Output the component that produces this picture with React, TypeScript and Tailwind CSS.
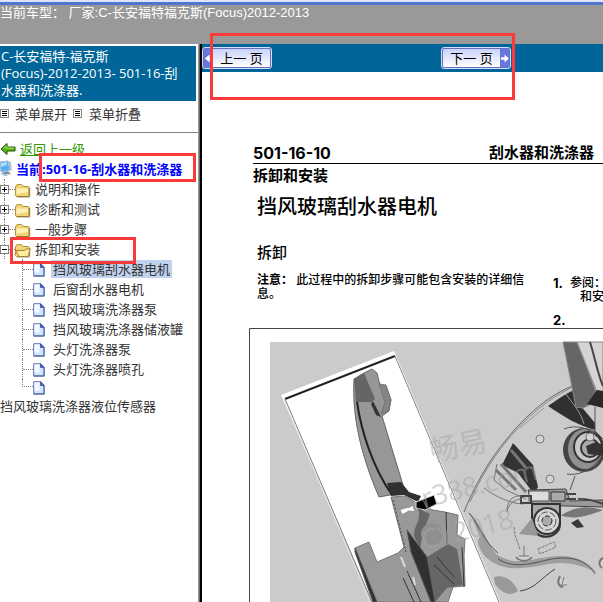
import React from "react";

const sections = ["说明和操作", "诊断和测试", "一般步骤"];

const pages = [
  "挡风玻璃刮水器电机",
  "后窗刮水器电机",
  "挡风玻璃洗涤器泵",
  "挡风玻璃洗涤器储液罐",
  "头灯洗涤器泵",
  "头灯洗涤器喷孔",
];

function MenuIcon() {
  return (
    <svg width="9" height="9" viewBox="0 0 9 9" aria-hidden="true" shapeRendering="crispEdges">
      <rect x="0.5" y="0.5" width="8" height="8" fill="#fff" stroke="#888" />
      <path d="M2 2.5h5M2 4.5h5M2 6.5h5" stroke="#000" />
    </svg>
  );
}

function BackArrow() {
  return (
    <svg width="16" height="14" viewBox="0 0 16 14" aria-hidden="true">
      <path d="M1 7 7 1.5V5h8v4H7v3.5Z" fill="#5cb615" stroke="#1f4d0a" strokeLinejoin="round" />
      <path d="M4 6.5 6.5 4v2H14" fill="none" stroke="#a8e860" />
    </svg>
  );
}

function ComputerIcon() {
  return (
    <svg width="12" height="18" viewBox="0 0 12 18" aria-hidden="true">
      <path d="m0 2 8-1 2 9-9 2Z" fill="#54aef3" stroke="#a5b9d1" />
      <path d="m8 1 3 1 1 8-2 1Z" fill="#b6c4d6" />
      <path d="m1 3 6-1 0 3-6 2Z" fill="#a5dcff" />
      <path d="m4 12 4-1 3 3-6 2-4-2Z" fill="#7890b0" />
      <path d="m0 14 6 1 4-1" fill="none" stroke="#d5dfeb" />
    </svg>
  );
}

function FolderIcon({ open = false }: { open?: boolean }) {
  return (
    <svg width="16" height="16" viewBox="0 0 16 16" className="mt-1" aria-hidden="true">
      <path d="M2 14.5h13V5" fill="none" stroke="#ccc" />
      <path d="M.5 4 2 1.5h4.5L8 3.5h5.5l1 1V13l-1 .5h-12l-1-1Z" fill="#f3d477" stroke="#b39238" />
      {open ? (
        <path d="M.8 7.5h8.7l1.5-1.5h4.2L13 13.5H4Z" fill="#ffeca3" stroke="#a88425" strokeLinejoin="round" />
      ) : (
        <>
          <path d="M1.5 5.5h12V9l-12 2Z" fill="#fff1b5" />
          <path d="M1.5 13.5h12.5V5" fill="none" stroke="#9c7a25" />
        </>
      )}
    </svg>
  );
}

function PageIcon() {
  return (
    <svg width="12" height="15" viewBox="0 0 12 15" aria-hidden="true">
      <path d="M.7 1.7h7l3.5 3.5v9H.7Z" fill="#cfe5ff" stroke="#6773a8" />
      <path d="M1.5 2.5h5v8h-5Z" fill="#f3f9ff" />
      <path d="M7.5 1.7v3.7h3.6Z" fill="#4668b8" stroke="#4a5ba5" />
      <path d="M1 13.8h10V6" fill="none" stroke="#53649e" />
    </svg>
  );
}

function Toggle({ open = false }: { open?: boolean }) {
  return (
    <svg width="9" height="9" viewBox="0 0 9 9" className="relative" aria-hidden="true" shapeRendering="crispEdges">
      <rect x="0.5" y="0.5" width="8" height="8" fill="#fff" stroke="#808080" />
      <path d={open ? "M2 4.5h5" : "M2 4.5h5M4.5 2v5"} stroke="#000" />
    </svg>
  );
}

function FolderRow({ label, open = false }: { label: string; open?: boolean }) {
  return (
    <li className="relative">
      <span className="absolute top-0 left-1 h-5 border-l border-dotted border-[#808080]" />
      <button className="flex h-5 items-center whitespace-nowrap">
        <Toggle open={open} />
        <span className="w-[6px] border-t border-dotted border-[#808080]" />
        <FolderIcon open={open} />
        <span className="ml-1">{label}</span>
      </button>
    </li>
  );
}

function Sidebar() {
  return (
    <aside className="w-[198px] shrink-0 overflow-hidden pt-0.5 text-[13px] leading-5 text-[#333]">
      <h1 className="mr-0.5 h-[55px] bg-[#006699] pt-0.5 pr-2 pl-px leading-[17px] text-white">
        C-长安福特-福克斯
        <br />
        (Focus)-2012-2013- 501-16-刮水器和洗涤器.
      </h1>
      <div className="flex h-8 items-center border-b border-[#808080] pb-[6px]">
        <button className="flex items-center gap-[6px]">
          <MenuIcon />
          菜单展开
        </button>
        <button className="ml-[6px] flex items-center gap-[7px]">
          <MenuIcon />
          菜单折叠
        </button>
      </div>
      <nav className="pt-[6px]">
        <a href="#" className="flex h-5 items-center gap-1 text-[#339900] underline">
          <BackArrow />
          返回上一级
        </a>
        <a href="#" className="flex h-5 items-center gap-1 font-bold whitespace-nowrap text-[#0000ff]">
          <ComputerIcon />
          <span>当前:501-16-刮水器和洗涤器</span>
        </a>
        <ul>
          {sections.map((label) => (
            <FolderRow key={label} label={label} />
          ))}
          <FolderRow label="拆卸和安装" open />
        </ul>
        <ul className="ml-[22px]">
          {pages.map((label, i) => (
            <li key={label} className="flex h-5 items-center border-l border-dotted border-[#808080]">
              <span className="w-[10px] border-t border-dotted border-[#808080]" />
              <PageIcon />
              <a
                href="#"
                className={i === 0 ? "ml-[6px] bg-[#c1d2ee] px-0.5 leading-[18px] whitespace-nowrap" : "ml-2 whitespace-nowrap"}
              >
                {label}
              </a>
            </li>
          ))}
          <li className="flex h-[17px] items-center">
            <span className="h-2 w-[11px] self-start border-b border-l border-dotted border-[#808080]" />
            <PageIcon />
          </li>
        </ul>
        <a href="#" className="block whitespace-nowrap">
          挡风玻璃洗涤器液位传感器
        </a>
      </nav>
    </aside>
  );
}

function Illustration() {
  return (
    <svg width="354" height="274" viewBox="249 328 354 274" className="block" role="img" aria-label="挡风玻璃刮水器电机">
      <path d="M249.5 602V328.5H603" fill="none" stroke="#444" />
      <path d="M270 342h333v260H270Z" fill="#cbcbcb" />

      <g fill="none" stroke="#666">
        <path d="M464 512c10-25 25-52 42-72 20-25 44-46 69-55" />
        <path d="M470 502c14-34 36-63 58-84 14-12 25-22 45-31" stroke="#888" />
        <path d="M520 428l24-20" stroke="#999" />
      </g>
      <path d="M548 406c9-6 17-12 26-16l6 15 15 18v7c-18-5-29-12-47-24Z" fill="#303030" />
      <path d="M566 394c5 8 14 16 18 30" fill="none" stroke="#999" />
      <path d="M563 342h14l22 58-16 8-7-1Z" fill="#666" stroke="#888" />
      <path d="M577 342h26v49l-4 6Z" fill="#d4d4d4" stroke="#888" />
      <path d="M590 342c4 12 8 33 13 44" fill="none" stroke="#444" strokeWidth="2" />
      <path d="M587 404l10-14 6 1v17Z" fill="#292929" />
      <path d="M595 407v24l8 8" fill="none" stroke="#555" />
      <path d="M513 443l20 22 5 22-4 7-16-21-16-8Z" fill="#333" />
      <path d="M511 450l15 18M501 464l25 28M496 470l20 20" stroke="#777" strokeWidth="3" />
      <path d="M497 464l-3 16 12 10 20 9M484 488c12 9 27 16 40 16" fill="none" stroke="#777" />
      <ellipse cx="584" cy="450" rx="21" ry="22" fill="#444" />
      <ellipse cx="585" cy="449" rx="17" ry="20" fill="#909090" />
      <ellipse cx="588" cy="447" rx="14" ry="15" fill="#c9c9c9" stroke="#333" strokeWidth="2" />
      <circle cx="590" cy="448" r="9" fill="#aaa" stroke="#333" strokeWidth="2" />
      <path d="M586 446l10-4 7 3v11l-15-2Z" fill="#333" />
      <path d="M564 429c12-5 26-1 33 8M567 474c11 2 23-4 29-11l7-8M575 476l-5 14" fill="none" stroke="#555" />
      <path d="M532 503l-4-13 38-1 4 12 33-1v7l-71-2Z" fill="#999" stroke="#444" />
      <path d="M529 491h20v10h-20Z" fill="#ddd" stroke="#555" />
      <path d="M551 492h14v9h-14Z" fill="#aaa" stroke="#333" />
      <path d="M566 494h10M566 499h10M578 499c11-1 19 3 25 5M521 496h10v7h-10Z" fill="none" stroke="#444" strokeWidth="2" />
      <path d="M521 496c-8-1-14 5-14 15M521 499c-9 1-13 7-14 13" fill="none" stroke="#777" />
      <path d="M532 504h28v20c0 16-27 18-28 0Z" fill="#aaa" stroke="#333" strokeWidth="2" />
      <circle cx="547" cy="521" r="13" fill="#d6d6d6" stroke="#333" strokeWidth="2" />
      <circle cx="547" cy="521" r="9" fill="none" stroke="#555" strokeDasharray="7 2" />
      <circle cx="547" cy="521" r="5" fill="#aaa" stroke="#222" strokeDasharray="5 2" />
      <path d="M519 534l13-16 6 18Z" fill="#989898" />
      <path d="M560 516c18-11 28-10 43-6-13 5-26 10-40 6Z" fill="#777" />
      <path d="M571 523l7-4 6 8-7 1Z" fill="#383838" />
      <path d="M470 513c13 14 17 29 26 41 22 15 40 2 64 2 20 0 29 8 37 17-15-8-30-12-48-9-23 4-44 9-61-5-10-9-12-19-8-22Z" fill="#9e9e9e" />
      <path d="M469 513c11 13 14 28 29 40M498 559c22 14 46-2 66-1 15 0 25 6 31 16" fill="none" stroke="#555" />
      <path d="M494 577c10-3 19 3 24 14-9 7-18 0-23-7Z" fill="#999" />
      <path d="M520 591c15-2 21-13 35-22" fill="none" stroke="#444" />
      <path d="M538 549l16-7 2 5-16 7ZM514 527l1 8 5 14" fill="none" stroke="#777" strokeDasharray="3 1" />
      <g fill="#d5d5d5" stroke="#777">
        <circle cx="540" cy="439" r="4" />
        <circle cx="550" cy="479" r="4" />
        <circle cx="590" cy="437" r="4" />
        <path d="M516 557c4 5 12 5 16 0M560 576c-3 6-2 10 3 11M603 558c-4 2-5 7-1 10" strokeWidth="2" />
        <path d="M524 546v10M519 556h10M564 577l-2 8h5" />
      </g>

      <path d="m281 395 113-44 106 251H372Z" fill="#fff" />
      <path d="m285 399 110-43" fill="none" stroke="#222" strokeWidth="2" />
      <path d="m285 399 87 203M395 356l104 246" fill="none" stroke="#777" />
      <path d="M370 602 284 399M500 602 396 356" fill="none" stroke="#e2e2e2" />
      <path
        d="m354 379 10-6 8-4 5 4 3 12 6 1 5 14-2 11-7 5 21 69-1 4-12 6-11 2c-19-44-27-82-25-118Z"
        fill="#979797"
        stroke="#666"
      />
      <path d="m354 379 10-6 11 26-4 3h-15Z" fill="#656565" />
      <path d="m379 384 7 1 5 15-4 12-6 2 4-12Z" fill="#858585" stroke="#777" />
      <path d="m373 401 8 16-5-2-5-11Z" fill="#333" />
      <path d="M357 402c4 28 15 64 35 93" fill="none" stroke="#222" strokeWidth="2" />
      <path d="m387 483 14-1 8 10 12 4-3 6-14-7-13 1Z" fill="#303030" />
      <path
        d="m391 497 15-1 12 8 15 6 12 2 13 3-1 20 8 4-1 16 1 31-12 1-5 15H375l-20-54 14-6 8 20 21-9 6-6-13-50Z"
        fill="#999"
        stroke="#777"
      />
      <path d="m393 500 13 52" stroke="#444" strokeDasharray="2 2" />
      <path d="m401 511 6-2 7 1M402 513l11-6" fill="none" stroke="#fff" strokeWidth="2" />
      <path d="m416 502 18-7 3 9-12 6-9-2Z" fill="#050505" stroke="#ddd" />
      <path d="m423 500 4 8" stroke="#777" />
      <path d="m418 508 12 6-7 18-3 17-6-13c0-12 8-15 4-28Z" fill="#666" />
      <circle cx="432" cy="534" r="11" fill="#909090" />
      <path d="m355 548 22 54h-4l-18-50ZM407 530l20 27 8 45h-4l-20-50Z" fill="#303030" stroke="#555" />
      <path d="m427 557 21-13 9 5 6 36-16 3-12 14Z" fill="#666" />
      <path d="m437 557 17 20M434 565l20 19M446 512l1 32M462 547l2 40M407 571l14 31M403 578l11 24" fill="none" stroke="#333" />
      <path d="m401 557 4 10M413 577l2 8" fill="none" stroke="#ddd" strokeWidth="2" />

      <g fill="#a6a6a6" fillOpacity="0.5" fontFamily="'Open Sans', 'Noto Sans CJK SC', sans-serif">
        <text x="432" y="462" fontSize="29" transform="rotate(-12 432 462)">畅易</text>
        <text x="424" y="508" fontSize="27" transform="rotate(-14 424 508)">r388.com</text>
        <text x="424" y="550" fontSize="27" transform="rotate(-14 424 550)">CY2018</text>
      </g>
    </svg>
  );
}

function DocumentPage() {
  return (
    <article className="ml-[47px] pt-[71px] font-['Inter','Noto_Sans_CJK_SC',sans-serif] text-black">
      <header className="ml-1 border-b border-black text-[15px] leading-5 font-bold">
        <div className="flex h-5 whitespace-nowrap">
          <span className="w-[236px] shrink-0 text-base leading-5">501-16-10</span>
          <span className="leading-5">刮水器和洗涤器</span>
        </div>
      </header>
      <p className="ml-1 pt-0.5 text-[15px] leading-5 font-bold">拆卸和安装</p>
      <h2 className="ml-2 pt-[3px] text-xl leading-9 font-medium whitespace-nowrap">挡风玻璃刮水器电机</h2>
      <h3 className="ml-2 pt-[18px] text-[15px] leading-5 font-medium">拆卸</h3>
      <div className="ml-2 flex h-[65px] pt-[10px] text-xs leading-[14px] font-medium whitespace-nowrap">
        <p className="w-[296px] shrink-0">
          <strong>注意：</strong> 此过程中的拆卸步骤可能包含安装的详细信
          <br />
          息。
        </p>
        <ol className="pt-[3px]">
          <li className="flex">
            <strong className="w-[17px] text-[13px]">1.</strong>
            <span>
              参阅：
              <br />
              <span className="pl-[10px]">和安</span>
            </span>
          </li>
          <li className="pt-[9px] text-[13px] font-bold">2.</li>
        </ol>
      </div>
      <Illustration />
    </article>
  );
}

function PageButton({ next = false }: { next?: boolean }) {
  const arrow = (
    <span className="flex w-[9px] items-center justify-center bg-[#6678dd] text-white">
      <svg width="8" height="11" viewBox="0 0 9 11" className={next ? "" : "rotate-180"} aria-hidden="true">
        <path d="M0 4h4V1l5 4.5L4 10V7H0Z" fill="currentColor" />
      </svg>
    </span>
  );
  return (
    <button className="flex h-5 w-[68px] shrink-0 overflow-hidden rounded-xs border border-[#6670bd] bg-linear-to-b from-[#c9d2fa] to-white text-[13px] leading-[18px] text-black outline outline-[#d7dcfa]">
      {!next && arrow}
      <span className="flex-1 whitespace-nowrap">{next ? "下一 页" : "上一 页"}</span>
      {next && arrow}
    </button>
  );
}

export default function App() {
  return (
    <div className="relative flex h-screen flex-col overflow-hidden bg-white font-['Open_Sans','Noto_Sans_CJK_SC',sans-serif]">
      <header className="h-11 shrink-0 border-t-2 border-[#dbe5f8] bg-[#999999]">
        <div className="h-[3px] bg-[#4f76cb]" />
        <p className="font-['Liberation_Sans','Noto_Sans_CJK_SC',sans-serif] text-[13px] leading-[15px] whitespace-nowrap text-white">
          当前车型： 厂家:C-长安福特福克斯(Focus)2012-2013
        </p>
      </header>
      <div className="flex min-h-0 flex-1">
        <Sidebar />
        <div className="w-1 shrink-0 border-r-2 border-l border-r-black border-l-[#999] bg-[#666]" />
        <main className="min-w-0 flex-1 overflow-hidden">
          <div className="flex h-7 items-center bg-[#006699] pl-px">
            <PageButton />
            <span className="w-[171px] shrink-0" />
            <PageButton next />
          </div>
          <DocumentPage />
        </main>
      </div>
      <div className="pointer-events-none absolute top-[33px] left-[210px] h-[67px] w-[305px] border-3 border-[#fc3a3a]" />
      <div className="pointer-events-none absolute top-[153px] left-[39px] h-[29px] w-[157px] border-3 border-[#fc3a3a]" />
      <div className="pointer-events-none absolute top-[237px] left-[10px] h-[27px] w-[126px] border-3 border-[#fc3a3a]" />
    </div>
  );
}
